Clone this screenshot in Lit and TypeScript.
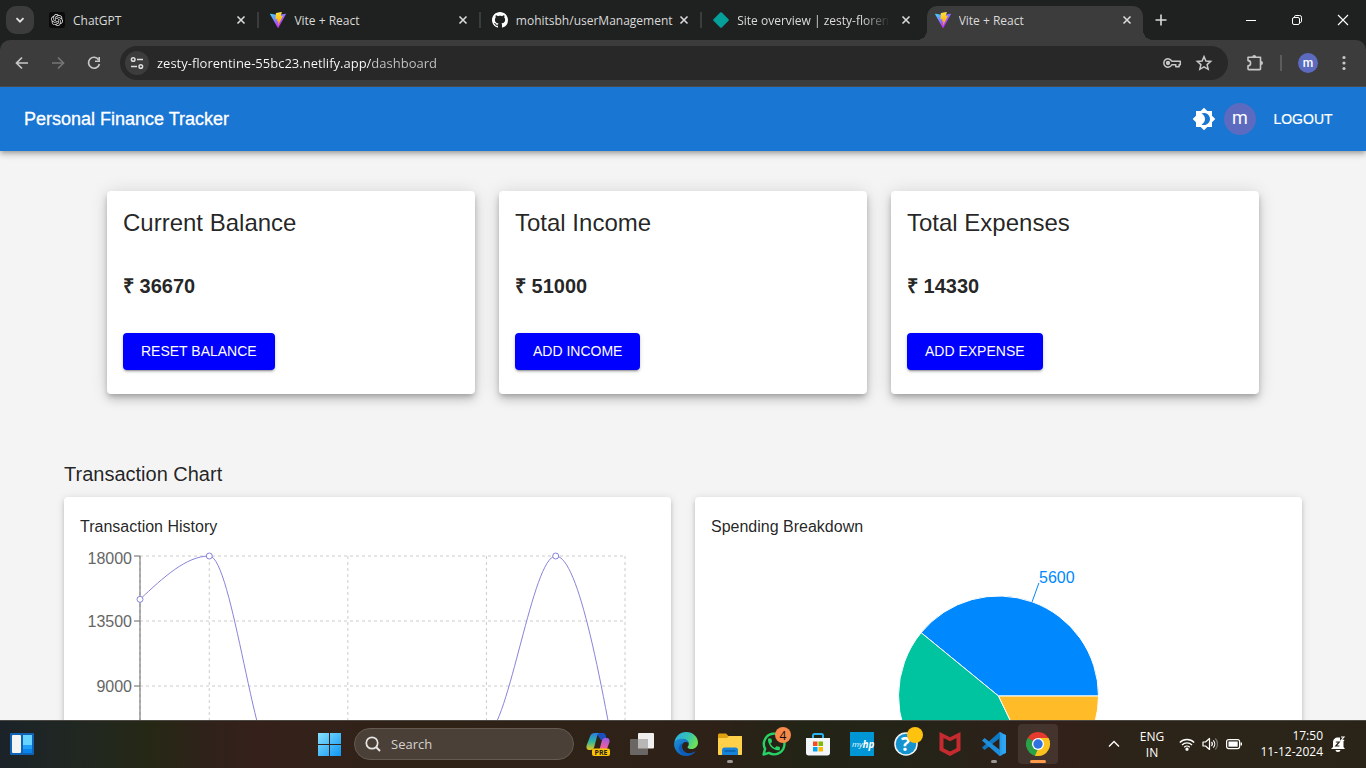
import { LitElement, html, css, svg, TemplateResult } from "lit";
import { customElement, property } from "lit/decorators.js";

const SYSTEM_FONT = css`"Open Sans", "Noto Sans", sans-serif`;
const PAGE_FONT = css`"Liberation Sans", Arial, sans-serif`;

const viteIcon = () => html`
  <svg width="16" height="16" viewBox="0 0 256 257" aria-hidden="true">
    <defs>
      <linearGradient id="va" x1="0%" x2="58%" y1="8%" y2="79%">
        <stop offset="0%" stop-color="#41d1ff" />
        <stop offset="100%" stop-color="#bd34fe" />
      </linearGradient>
      <linearGradient id="vb" x1="43%" x2="50%" y1="2%" y2="89%">
        <stop offset="0%" stop-color="#ffea83" />
        <stop offset="8%" stop-color="#ffdd35" />
        <stop offset="100%" stop-color="#ffa800" />
      </linearGradient>
    </defs>
    <path fill="url(#va)" d="M255.153 37.938L134.897 252.976c-2.483 4.44-8.862 4.466-11.382.048L.875 37.958c-2.746-4.814 1.371-10.646 6.827-9.67l120.385 21.517a6.537 6.537 0 0 0 2.322-.004l117.867-21.483c5.438-.991 9.574 4.796 6.877 9.62Z" />
    <path fill="url(#vb)" d="M185.432.063L96.44 17.501a3.268 3.268 0 0 0-2.634 3.014l-5.474 92.456a3.268 3.268 0 0 0 3.997 3.378l24.777-5.718c2.318-.535 4.413 1.507 3.936 3.838l-7.361 36.047c-.495 2.426 1.782 4.5 4.151 3.78l15.304-4.649c2.372-.72 4.652 1.36 4.15 3.788l-11.698 56.621c-.732 3.542 3.979 5.473 5.943 2.437l1.313-2.028l72.516-144.72c1.215-2.423-.88-5.186-3.54-4.672l-25.505 4.922c-2.396.462-4.435-1.77-3.759-4.114l16.646-57.705c.677-2.35-1.37-4.583-3.769-4.113Z" />
  </svg>`;

const chatIcon = () => html`
  <svg width="16" height="16" viewBox="0 0 32 32" aria-hidden="true">
    <rect width="32" height="32" rx="5" fill="#0b0b0b" />
    <path transform="translate(4 4)" fill="#e6e6e6" d="M22.2819 9.8211a5.9847 5.9847 0 0 0-.5157-4.9108 6.0462 6.0462 0 0 0-6.5098-2.9A6.0651 6.0651 0 0 0 4.9807 4.1818a5.9847 5.9847 0 0 0-3.9977 2.9 6.0462 6.0462 0 0 0 .7427 7.0966 5.98 5.98 0 0 0 .511 4.9107 6.051 6.051 0 0 0 6.5146 2.9001A5.9847 5.9847 0 0 0 13.2599 24a6.0557 6.0557 0 0 0 5.7718-4.2058 5.9894 5.9894 0 0 0 3.9977-2.9001 6.0557 6.0557 0 0 0-.7475-7.0729zm-9.022 12.6081a4.4755 4.4755 0 0 1-2.8764-1.0408l.1419-.0804 4.7783-2.7582a.7948.7948 0 0 0 .3927-.6813v-6.7369l2.02 1.1686a.071.071 0 0 1 .038.052v5.5826a4.504 4.504 0 0 1-4.4945 4.4944zm-9.6607-4.1254a4.4708 4.4708 0 0 1-.5346-3.0137l.142.0852 4.783 2.7582a.7712.7712 0 0 0 .7806 0l5.8428-3.3685v2.3324a.0804.0804 0 0 1-.0332.0615L9.74 19.9502a4.4992 4.4992 0 0 1-6.1408-1.6464zM2.3408 7.8956a4.485 4.485 0 0 1 2.3655-1.9728V11.6a.7664.7664 0 0 0 .3879.6765l5.8144 3.3543-2.0201 1.1685a.0757.0757 0 0 1-.071 0l-4.8303-2.7865A4.504 4.504 0 0 1 2.3408 7.872zm16.5963 3.8558L13.1038 8.364 15.1192 7.2a.0757.0757 0 0 1 .071 0l4.8303 2.7913a4.4944 4.4944 0 0 1-.6765 8.1042v-5.6772a.79.79 0 0 0-.407-.667zm2.0107-3.0231l-.142-.0852-4.7735-2.7818a.7759.7759 0 0 0-.7854 0L9.409 9.2297V6.8974a.0662.0662 0 0 1 .0284-.0615l4.8303-2.7866a4.4992 4.4992 0 0 1 6.6802 4.66zM8.3065 12.863l-2.02-1.1638a.0804.0804 0 0 1-.038-.0567V6.0742a4.4992 4.4992 0 0 1 7.3757-3.4537l-.142.0805L8.704 5.459a.7948.7948 0 0 0-.3927.6813zm1.0976-2.3654l2.602-1.4998 2.6069 1.4998v2.9994l-2.5974 1.4997-2.6067-1.4997Z" />
  </svg>`;

const githubIcon = () => html`
  <svg width="16" height="16" viewBox="0 0 16 16" aria-hidden="true">
    <path fill="#fff" d="M8 0C3.58 0 0 3.58 0 8c0 3.54 2.29 6.53 5.47 7.59.4.07.55-.17.55-.38 0-.19-.01-.82-.01-1.49-2.01.37-2.53-.49-2.69-.94-.09-.23-.48-.94-.82-1.13-.28-.15-.68-.52-.01-.53.63-.01 1.08.58 1.23.82.72 1.21 1.87.87 2.33.66.07-.52.28-.87.51-1.07-1.78-.2-3.64-.89-3.64-3.95 0-.87.31-1.59.82-2.15-.08-.2-.36-1.02.08-2.12 0 0 .67-.21 2.2.82.64-.18 1.32-.27 2-.27s1.36.09 2 .27c1.53-1.04 2.2-.82 2.2-.82.44 1.1.16 1.92.08 2.12.51.56.82 1.27.82 2.15 0 3.07-1.87 3.75-3.65 3.95.29.25.54.73.54 1.48 0 1.07-.01 1.93-.01 2.2 0 .21.15.46.55.38A8.01 8.01 0 0 0 16 8c0-4.42-3.58-8-8-8z" />
  </svg>`;

const netlifyIcon = () => html`
  <svg width="16" height="16" viewBox="0 0 16 16" aria-hidden="true">
    <path fill="#05a09a" d="M7.2.5a1.2 1.2 0 0 1 1.6 0l6.7 6.7a1.2 1.2 0 0 1 0 1.6l-6.7 6.7a1.2 1.2 0 0 1-1.6 0L.5 8.800a1.200 1.200 0 0 1 0-1.600z" />
  </svg>`;

const closeIcon = () => html`
  <svg width="16" height="16" viewBox="0 0 16 16" aria-hidden="true">
    <path d="M4.500 4.500l7 7M11.500 4.500l-7 7" stroke="#dadada" stroke-width="1.600" />
  </svg>`;

interface Tab { title: string; icon: () => TemplateResult; active?: boolean; last?: boolean; }

const TABS: Tab[] = [
  { title: "ChatGPT", icon: chatIcon },
  { title: "Vite + React", icon: viteIcon },
  { title: "mohitsbh/userManagement", icon: githubIcon },
  { title: "Site overview | zesty-florentine", icon: netlifyIcon, last: true },
  { title: "Vite + React", icon: viteIcon, active: true },
];

@customElement("browser-bar")
class BrowserBar extends LitElement {
  static styles = css`
    :host { display: block; background: #1f2120; font: 12px/16px ${SYSTEM_FONT}; color: #dadada; }
    button { all: unset; box-sizing: border-box; display: grid; place-items: center; cursor: pointer; flex: none; }
    svg { display: block; }
    .strip { display: flex; height: 40px; }
    .search { width: 28px; height: 28px; margin: 6px 6px 0 6px; border-radius: 10px; background: #3c3c3c; }
    .tabs { display: flex; flex: 0 1 1107px; min-width: 0; }
    .slot { display: flex; flex: 1 1 0; min-width: 0; align-items: flex-end; padding-left: 1px; }
    .tab { position: relative; display: flex; flex: 1; min-width: 0; align-items: center; height: 34px; padding: 0 8px 6px 8px; box-sizing: border-box; }
    .tab svg { flex: none; }
    .title { flex: 1; min-width: 0; margin-left: 8px; padding-top: 2px; overflow: hidden; white-space: nowrap; }
    .fade { -webkit-mask-image: linear-gradient(to right, #000 78%, transparent 95%); mask-image: linear-gradient(to right, #000 78%, transparent 95%); }
    .sep { flex: none; width: 2px; height: 16px; margin: 0 2px 12px 0; background: #3c3c3c; }
    .sep.off { background: transparent; }
    .active { background: #3c3c3c; border-radius: 10px 10px 0 0; }
    .active::before, .active::after { content: ""; position: absolute; bottom: 0; width: 10px; height: 10px; }
    .active::before { left: -10px; background: radial-gradient(circle at 0 0, transparent 10px, #3c3c3c 10px); }
    .active::after { right: -10px; background: radial-gradient(circle at 100% 0, transparent 10px, #3c3c3c 10px); }
    .new { width: 28px; height: 40px; }
    .window { display: flex; margin-left: auto; }
    .window button { width: 46px; height: 40px; }
    .bar { display: flex; align-items: center; gap: 16px; height: 46px; padding: 0 12px; background: #3c3c3c; border-bottom: 1px solid #4a4a4a; border-radius: 10px 10px 0 0; }
    .omni { display: flex; flex: 1; min-width: 0; align-items: center; height: 34px; border-radius: 17px; background: #282828; padding: 0 14px 0 5px; box-sizing: border-box; gap: 12px; }
    .site { width: 24px; height: 24px; border-radius: 12px; background: #3c3c3c; }
    .url { flex: 1; min-width: 0; border: 0; outline: 0; padding: 0; margin-left: -4px; height: 24px; font: 13px/24px ${SYSTEM_FONT}; color: transparent; background: linear-gradient(to right, #fff 214px, #c7c7c7 214px); -webkit-background-clip: text; background-clip: text; }
    .rule { width: 2px; height: 16px; background: #5c5c5c; }
    .me { width: 20px; height: 20px; border-radius: 10px; background: #5c6bc0; color: #fff; font: 500 12px/18px Roboto, sans-serif; }
  `;

  render() {
    return html`
      <div class="strip">
        <button class="search" aria-label="Search tabs">
          <svg width="12" height="12" viewBox="0 0 12 12"><path d="M2.500 4.200L6 7.700l3.500-3.500" fill="none" stroke="#e3e3e3" stroke-width="1.800" /></svg>
        </button>
        <div class="tabs">
          ${TABS.map((t) => html`
            <div class="slot">
              <div class="tab ${t.active ? "active" : ""}">
                ${t.icon()}
                <span class="title ${t.last ? "fade" : ""}">${t.title}</span>
                <button aria-label="Close tab">${closeIcon()}</button>
              </div>
              <span class="sep ${t.last || t.active ? "off" : ""}"></span>
            </div>`)}
        </div>
        <button class="new" aria-label="New tab">
          <svg width="14" height="14" viewBox="0 0 14 14"><path d="M7 1.500v11M1.500 7h11" stroke="#dadada" stroke-width="1.600" /></svg>
        </button>
        <div class="window">
          <button aria-label="Minimize"><svg width="12" height="12" viewBox="0 0 12 12"><path d="M1 6.500h10" stroke="#fff" /></svg></button>
          <button aria-label="Restore"><svg width="12" height="12" viewBox="0 0 12 12" fill="none" stroke="#fff"><rect x="1.500" y="3.500" width="7" height="7" rx="1.500" /><path d="M3.500 3V2.800A1.300 1.300 0 0 1 4.800 1.500h3.900a1.800 1.800 0 0 1 1.800 1.800v3.900a1.300 1.300 0 0 1-1.300 1.300H9" /></svg></button>
          <button aria-label="Close"><svg width="12" height="12" viewBox="0 0 12 12"><path d="M1 1l10 10M11 1L1 11" stroke="#fff" stroke-width="1.100" /></svg></button>
        </div>
      </div>
      <div class="bar">
        <button aria-label="Back"><svg width="20" height="20" viewBox="0 0 20 20"><path d="M16 10H5M10 4.500L4.500 10l5.500 5.500" fill="none" stroke="#c7c7c7" stroke-width="1.700" /></svg></button>
        <button aria-label="Forward"><svg width="20" height="20" viewBox="0 0 20 20"><path d="M4 10h11M10 4.500l5.500 5.500-5.500 5.500" fill="none" stroke="#757575" stroke-width="1.700" /></svg></button>
        <button aria-label="Reload"><svg width="20" height="20" viewBox="0 0 20 20"><path d="M14.700 6.800A5.500 5.500 0 1 0 15.400 11" fill="none" stroke="#c7c7c7" stroke-width="1.700" /><path d="M16 4v5h-5V7.400h3.400V4z" fill="#c7c7c7" /></svg></button>
        <div class="omni">
          <button class="site" aria-label="View site information">
            <svg width="16" height="16" viewBox="0 0 16 16" fill="none" stroke="#dcdcdc" stroke-width="1.500"><circle cx="4.200" cy="4.500" r="1.800" /><path d="M8 4.500h6M2 11.500h6" /><circle cx="11.800" cy="11.500" r="1.800" /></svg>
          </button>
          <input class="url" aria-label="Address" .value=${"zesty-florentine-55bc23.netlify.app/dashboard"} />
          <button aria-label="Passwords"><svg width="20" height="20" viewBox="0 0 20 20" fill="none" stroke="#c7c7c7" stroke-width="1.500"><path d="M9.800 8.200h8.500v3.600h-1.200v2h-3.300v-2H9.800a4.200 4.200 0 1 1 0-3.600z" stroke-linejoin="round" /><circle cx="6" cy="10" r="1.400" fill="#c7c7c7" /></svg></button>
          <button aria-label="Bookmark"><svg width="20" height="20" viewBox="0 0 20 20"><path d="M10 3.600l1.900 4.400 4.800.4-3.600 3.200 1.100 4.700-4.200-2.500-4.200 2.500 1.100-4.700-3.600-3.200 4.800-.4z" fill="none" stroke="#c7c7c7" stroke-width="1.500" /></svg></button>
        </div>
        <button aria-label="Extensions"><svg width="20" height="20" viewBox="-1 0 20 20"><path d="M3 4.200h12.500v5.600a1 1 0 0 1 0 .4v5.600a.8.800 0 0 1-.8.800H3.800a.8.800 0 0 1-.8-.8v-3a2.600 2.600 0 0 0 0-5.200z" fill="none" stroke="#c7c7c7" stroke-width="1.600" stroke-linejoin="round" /><path d="M7.200 4a2 2 0 0 1 4 0zM16 8a2 2 0 0 1 0 4z" fill="#c7c7c7" /></svg></button>
        <span class="rule"></span>
        <button class="me" aria-label="Profile">m</button>
        <button aria-label="Menu"><svg width="20" height="20" viewBox="0 0 20 20" fill="#c7c7c7"><circle cx="10" cy="4.500" r="1.600" /><circle cx="10" cy="10" r="1.600" /><circle cx="10" cy="15.500" r="1.600" /></svg></button>
      </div>`;
  }
}

const Y_TICKS = [
  { label: "18000", y: 5, base: 13 },
  { label: "13500", y: 70, base: 76 },
  { label: "9000", y: 135, base: 141 },
  { label: "4500", y: 200, base: 206 },
  { label: "0", y: 265, base: 271 },
];
const X_LINES = [129.29, 267.86, 406.43, 545];
const DOTS = [[60, 48.3], [129.29, 5], [198.57, 220], [406.43, 185], [475.71, 5], [545, 265]];

@customElement("history-chart")
class HistoryChart extends LitElement {
  static styles = css`
    :host { display: block; }
    svg { display: block; width: 100%; height: 300px; overflow: visible; }
    text { font: 16px ${PAGE_FONT}; fill: #666; }
    .grid { stroke: #ccc; stroke-dasharray: 3 3; }
    .axis { stroke: #666; }
    .line { fill: none; stroke: #8884d8; }
    .dot { fill: #fff; stroke: #8884d8; }
  `;
  render() {
    return html`
      <svg viewBox="0 0 575 300" preserveAspectRatio="xMinYMin meet" role="img" aria-label="Transaction history">
        ${Y_TICKS.map((t) => svg`<line class="grid" x1="60" x2="545" y1=${t.y} y2=${t.y} />`)}
        ${X_LINES.map((x) => svg`<line class="grid" x1=${x} x2=${x} y1="5" y2="265" />`)}
        <line class="grid" x1="60" x2="60" y1="5" y2="265" />
        <line class="axis" x1="60" x2="60" y1="5" y2="265" />
        <line class="axis" x1="60" x2="545" y1="265" y2="265" />
        ${Y_TICKS.map((t) => svg`
          <line class="axis" x1="54" x2="60" y1=${t.y} y2=${t.y} />
          <text x="52" y=${t.base} text-anchor="end">${t.label}</text>`)}
        <path class="line" d="M60 48.300C83.100 26.700 106.200 5 129.290 5C152.400 5 175.500 220 198.570 220C221.700 220 244.800 245 267.860 245C290.900 245 314 230 337.140 225C360.200 215 383.300 196 406.430 185C429.500 174 452.600 5 475.710 5C498.800 5 521.900 131 545 265" />
        ${DOTS.map(([x, y]) => svg`<circle class="dot" cx=${x} cy=${y} r="3" />`)}
      </svg>`;
  }
}

const SLICES = [
  { from: 0, to: 140.7, color: "#0088fe" },
  { from: 140.7, to: 295.7, color: "#00c49f" },
  { from: 295.7, to: 360, color: "#ffbb28" },
];

function slicePath(from: number, to: number): string {
  const p = (a: number) => {
    const r = (a * Math.PI) / 180;
    return `${(287.5 + 100 * Math.cos(r)).toFixed(2)} ${(145 - 100 * Math.sin(r)).toFixed(2)}`;
  };
  return `M287.5 145L${p(from)}A100 100 0 ${to - from > 180 ? 1 : 0} 0 ${p(to)}Z`;
}

@customElement("spending-chart")
class SpendingChart extends LitElement {
  static styles = css`
    :host { display: block; }
    svg { display: block; width: 100%; height: 300px; }
    text { font: 16px ${PAGE_FONT}; fill: #0088fe; }
    .slice { stroke: #fff; }
    .lead { fill: none; stroke: #0088fe; }
  `;
  render() {
    return html`
      <svg viewBox="0 0 575 300" preserveAspectRatio="xMidYMin meet" role="img" aria-label="Spending breakdown">
        ${SLICES.map((s) => svg`<path class="slice" fill=${s.color} d=${slicePath(s.from, s.to)} />`)}
        <path class="lead" d="M321.100 50.800L327.900 32" />
        <text x="328" y="32">5600</text>
      </svg>`;
  }
}

@customElement("summary-card")
class SummaryCard extends LitElement {
  @property() heading = "";
  @property() amount = "";
  @property() action = "";

  static styles = css`
    :host { display: flex; flex-direction: column; align-items: flex-start; gap: 32px; padding: 16px 16px 24px; background: #fff; border-radius: 4px; box-shadow: 0 3px 5px -1px rgba(0,0,0,.2), 0 6px 10px 0 rgba(0,0,0,.14), 0 1px 18px 0 rgba(0,0,0,.12); color: rgba(0,0,0,.87); }
    h2 { margin: 0; font-size: 24px; line-height: 32px; font-weight: 400; }
    p { margin: 0; font-size: 20px; line-height: 30px; font-weight: 700; }
    button { border: 0; border-radius: 4px; padding: 0 18px 2px; height: 37px; background: #00f; color: #fff; font: 14px/24px ${PAGE_FONT}; text-transform: uppercase; cursor: pointer; box-shadow: 0 3px 1px -2px rgba(0,0,0,.2), 0 2px 2px 0 rgba(0,0,0,.14), 0 1px 5px 0 rgba(0,0,0,.12); }
  `;
  render() {
    return html`<h2>${this.heading}</h2><p>₹ ${this.amount}</p><button>${this.action}</button>`;
  }
}

@customElement("finance-page")
class FinancePage extends LitElement {
  static styles = css`
    :host { display: flex; flex-direction: column; background: #f4f4f4; font-family: ${PAGE_FONT}; color: rgba(0,0,0,.87); }
    header { display: flex; flex: none; align-items: center; gap: 8px; height: 64px; padding: 0 24px; background: #1976d2; color: #fff; position: relative; box-shadow: 0 2px 4px -1px rgba(0,0,0,.2), 0 4px 5px 0 rgba(0,0,0,.14), 0 1px 10px 0 rgba(0,0,0,.12); }
    h1 { flex: 1; margin: 0; font-size: 18px; line-height: 28px; font-weight: 400; -webkit-text-stroke: 0.3px #fff; }
    header button { border: 0; padding: 0; background: none; color: inherit; font: 14px/24px ${PAGE_FONT}; cursor: pointer; }
    .theme svg { display: block; }
    .avatar { display: grid; place-items: center; width: 32px; height: 32px; border-radius: 16px; background: #5c6bc0; font: 18px/30px Roboto, sans-serif; align-content: start; }
    header .logout { width: 78px; -webkit-text-stroke: 0.2px #fff; }
    .summary { display: grid; grid-template-columns: repeat(3, 1fr); gap: 24px; box-sizing: border-box; width: 100%; max-width: 1200px; margin: 0 auto; padding: 40px 24px 64px; }
    .charts { padding: 0 64px 32px; }
    h2 { margin: 0 0 6px; font-size: 20px; line-height: 33px; font-weight: 400; }
    .pair { display: grid; grid-template-columns: 1fr 1fr; gap: 24px; }
    .panel { background: #fff; border-radius: 4px; padding: 16px; box-shadow: 0 3px 3px -2px rgba(0,0,0,.2), 0 3px 4px 0 rgba(0,0,0,.14), 0 1px 8px 0 rgba(0,0,0,.12); }
    h3 { margin: 0 0 10px; font-size: 16px; line-height: 28px; font-weight: 400; }
  `;
  render() {
    return html`
      <header>
        <h1>Personal Finance Tracker</h1>
        <button class="theme" aria-label="Toggle theme">
          <svg width="24" height="24" viewBox="0 0 24 24" fill="#fff"><path d="M20 8.690V4h-4.690L12 .69 8.690 4H4v4.690L.69 12 4 15.310V20h4.690L12 23.310 15.310 20H20v-4.690L23.310 12 20 8.690zM12 18c-.89 0-1.740-.2-2.500-.55C11.560 16.500 13 14.420 13 12s-1.440-4.500-3.500-5.450C10.260 6.200 11.110 6 12 6c3.310 0 6 2.690 6 6s-2.690 6-6 6z" /></svg>
        </button>
        <span class="avatar">m</span>
        <button class="logout">LOGOUT</button>
      </header>
      <section class="summary">
        <summary-card heading="Current Balance" amount="36670" action="Reset Balance"></summary-card>
        <summary-card heading="Total Income" amount="51000" action="Add Income"></summary-card>
        <summary-card heading="Total Expenses" amount="14330" action="Add Expense"></summary-card>
      </section>
      <section class="charts">
        <h2>Transaction Chart</h2>
        <div class="pair">
          <div class="panel"><h3>Transaction History</h3><history-chart></history-chart></div>
          <div class="panel"><h3>Spending Breakdown</h3><spending-chart></spending-chart></div>
        </div>
      </section>`;
  }
}

interface App { name: string; art: TemplateResult; state?: string; }

const APPS: App[] = [
  { name: "Copilot", art: svg`
    <defs>
      <linearGradient id="c1" x1="0" y1="0" x2="0" y2="1"><stop offset="0" stop-color="#2b7de0" /><stop offset=".5" stop-color="#2fb5a0" /><stop offset="1" stop-color="#e8c71c" /></linearGradient>
      <linearGradient id="c2" x1="0.500" y1="0" x2="0.300" y2="1"><stop offset="0" stop-color="#a05be0" /><stop offset=".5" stop-color="#e85fa0" /><stop offset="1" stop-color="#ff8c5a" /></linearGradient>
    </defs>
    <path d="M10 1h7c1.500 0 2.300 1 2.800 2.600L21 8h-6z" fill="#1b4fc0" />
    <path d="M8.500 1H14c-1.500 0-2.300 1-2.800 2.800L8.200 15c-.6 2-1.600 3-3.400 3H3.500C.8 18 0 16 .6 13.500L4.200 4C5 2 6.300 1 8.500 1z" fill="url(#c1)" />
    <path d="M15.500 23H10c1.500 0 2.300-1 2.800-2.800L15.800 9c.6-2 1.600-3 3.400-3h1.300c2.700 0 3.500 2 2.900 4.500L19.800 20c-.8 2-2.100 3-4.300 3z" fill="url(#c2)" />
    <rect x="6" y="16.500" width="18" height="7.500" rx="2" fill="#fdc500" />
    <text x="15" y="22.800" font-size="7" font-weight="700" text-anchor="middle" fill="#222">PRE</text>` },
  { name: "Task view", art: svg`
    <rect x="8" y="1" width="16" height="15.500" rx="1" fill="#efefef" />
    <rect x="0" y="7" width="18" height="16" rx="1" fill="#6a6664" />
    <rect x="8" y="7" width="10" height="9.500" fill="#b9b7b6" />` },
  { name: "Edge", art: svg`
    <defs>
      <linearGradient id="e1" x1="0" y1="0" x2="1" y2=".4"><stop offset="0" stop-color="#2aa9e8" /><stop offset=".6" stop-color="#35c3b4" /><stop offset="1" stop-color="#6be05a" /></linearGradient>
      <linearGradient id="e2" x1="0" y1="0" x2="1" y2="1"><stop offset="0" stop-color="#1b8fdc" /><stop offset="1" stop-color="#0d4ea6" /></linearGradient>
    </defs>
    <path d="M.3 11C1 4.500 6 0 12 0c7 0 12 5 12 10.500 0 4-3 6.500-6.500 6.500-2.500 0-4-1-4-1.800 0-.6 1.300-1.200 1.300-3.200 0-2.800-2.600-4.800-6-4.800C4.500 7.200 1.500 9 .3 11z" fill="url(#e1)" />
    <path d="M.1 11.500C.8 8.500 4 6.800 8 6.800c4 0 6.600 2.200 6.800 4.800-.6-1-1.800-1.600-3.200-1.600-2 0-3.600 1.700-3.600 4.400 0 4 3.500 7.200 8 7 2.300 0 4-.8 5.500-1.800C19.500 22.300 16 24 12 24 5 24-.3 18 .1 11.500z" fill="url(#e2)" />
    <path d="M8.800 11.200c-1.500 1.800-1.300 5 .4 7.400 2 2.700 5.500 3.500 8.500 2.500 1.700-.5 3-1.300 3.800-2-.8 1.500-3 3.600-6 4.400C9 24.500 4 19.500 5 15c.5-2 2-3.400 3.800-3.800z" fill="#0c5cb8" />` },
  { name: "File Explorer", state: "open", art: svg`
    <path d="M0 3c0-.8.600-1.500 1.500-1.500H8L10.500 4H23c.6 0 1 .4 1 1v4H0z" fill="#e0a010" />
    <path d="M0 6h9l2-2h12c.6 0 1 .4 1 1v17c0 .6-.4 1-1 1H1c-.6 0-1-.4-1-1z" fill="#ffd04a" />
    <path d="M4 23v-5c0-1.500 1-2.500 2.500-2.500h11c1.500 0 2.500 1 2.500 2.500v5z" fill="#1683d8" />
    <path d="M6.500 19h11" stroke="#0c5ea8" stroke-width="1.500" />` },
  { name: "WhatsApp", art: svg`
    <path d="M1.500 22.500l1.600-5.600A10.300 10.300 0 1 1 7 20.900z" fill="none" stroke="#25d366" stroke-width="2.400" stroke-linejoin="round" />
    <path transform="translate(4 4.500) scale(.66)" d="M6.620 10.790c1.440 2.830 3.760 5.140 6.590 6.590l2.200-2.200c.27-.27.670-.36 1.020-.24 1.120.37 2.330.57 3.570.57.550 0 1 .45 1 1V20c0 .55-.45 1-1 1-9.390 0-17-7.610-17-17 0-.55.450-1 1-1h3.500c.55 0 1 .45 1 1 0 1.250.2 2.450.57 3.570.11.350.030.740-.25 1.020l-2.200 2.200z" fill="#25d366" />
    <circle cx="21" cy="3" r="8" fill="#f7894a" />
    <text x="21" y="7.500" font-size="12" text-anchor="middle" fill="#111">4</text>` },
  { name: "Store", art: svg`
    <path d="M7 6V3.500C7 2.500 7.500 2 8.500 2h7c1 0 1.500.5 1.500 1.500V6" fill="none" stroke="#29b3f0" stroke-width="2" />
    <path d="M0 6h24v15c0 1.500-1 2.500-2.500 2.500h-19C1 23.500 0 22.500 0 21z" fill="#f3f6f8" />
    <path d="M7 9.500h4.500V14H7z" fill="#f25022" /><path d="M12.500 9.500H17V14h-4.500z" fill="#7fba00" />
    <path d="M7 15h4.500v4.500H7z" fill="#00a4ef" /><path d="M12.500 15H17v4.500h-4.500z" fill="#ffb900" />` },
  { name: "myHP", art: svg`
    <rect width="24" height="24" fill="#0096d6" />
    <text x="2" y="15" font-size="8" font-style="italic" fill="#fff">my</text>
    <text x="12.500" y="15.500" font-size="10" font-weight="700" font-style="italic" fill="#fff">hp</text>` },
  { name: "Help", art: svg`
    <circle cx="12" cy="12" r="11.800" fill="#f4f4f4" /><circle cx="12" cy="12" r="10.300" fill="#1593cf" />
    <text x="11.500" y="19" font-size="19" font-weight="700" text-anchor="middle" fill="#fff">?</text>
    <circle cx="21" cy="3" r="8" fill="#ffc20e" />` },
  { name: "McAfee", art: svg`
    <path d="M1.500 0L12 5.200 22.500 0v18.500L12 24 1.500 18.500zM5.500 6v10.300L12 19.600l6.500-3.300V6L12 9.300z" fill="#c52a2f" fill-rule="evenodd" />` },
  { name: "Visual Studio Code", state: "open", art: svg`
    <path d="M17.500 0L24 3v18l-6.500 3z" fill="#2ea5f2" />
    <path d="M17.500 0L0 15.500 2.500 18 18 6z" fill="#0f78c4" />
    <path d="M17.500 24L0 8.500 2.500 6 18 18z" fill="#1d8edb" />
    <path d="M17.500 0L18 6v12l-.5 6 2.500-1V1z" fill="#249ceb" />` },
  { name: "Chrome", state: "current", art: svg`
    <path d="M12 12L1.600 6A12 12 0 0 1 22.400 6z" fill="#e53a2d" />
    <path d="M12 12L22.400 6A12 12 0 0 1 12 24z" fill="#fcc31e" />
    <path d="M12 12v12A12 12 0 0 1 1.600 6z" fill="#2aa148" />
    <path d="M12 6h10.400c.8 1.500 1.300 3 1.500 5H17z" fill="#fcc31e" />
    <path d="M17.200 15L12 24c-1.500 0-2-.1-3-.3L12 17z" fill="#fcc31e" />
    <path d="M6.800 15L1.600 6 7 9z" fill="#2aa148" />
    <circle cx="12" cy="12" r="6" fill="#fff" /><circle cx="12" cy="12" r="4.700" fill="#2f73e0" />` },
];

@customElement("task-bar")
class TaskBar extends LitElement {
  static styles = css`
    :host { display: grid; grid-template-columns: 1fr auto 1fr; align-items: center; height: 48px; box-shadow: inset 0 1px #4c4844; color: #fff; font: 12px/16px ${SYSTEM_FONT}; background: linear-gradient(to right, #1b2329 0%, #22281f 7%, #262815 11%, #2f221a 15%, #35201a 19%, #33221a 23%, #2f2217 30%, #2e2117 52%, #222416 59%, #262318 69%, #33201a 77%, #2c2418 83%, #2a2418 100%); }
    button { all: unset; display: grid; place-items: center; cursor: pointer; }
    svg { display: block; overflow: visible; font-family: ${SYSTEM_FONT}; }
    .widgets { padding-left: 10px; justify-self: start; }
    .mid { display: flex; align-items: center; padding-left: 2px; }
    .app { position: relative; width: 44px; height: 48px; }
    .app.current::before { content: ""; position: absolute; inset: 4px 2px; border-radius: 4px; background: rgba(255,255,255,.09); }
    .app svg { position: relative; }
    .app.open::after, .app.current::after { content: ""; position: absolute; bottom: 5px; height: 3px; border-radius: 2px; width: 6px; background: #9a9794; }
    .app.current::after { width: 16px; background: #ff9a4a; }
    .find { display: flex; align-items: center; gap: 9px; box-sizing: border-box; width: 220px; height: 32px; margin: 0 2px; padding: 0 9px; border: 1px solid #655a51; border-radius: 16px; background: #4b4037; }
    .find input { flex: 1; min-width: 0; border: 0; outline: 0; padding: 0; background: none; color: #fff; font: 13px/20px ${SYSTEM_FONT}; }
    .find input::placeholder { color: #d6d2cf; opacity: 1; }
    .tray { display: flex; align-items: center; justify-self: end; padding-right: 20px; }
    .lang { width: 40px; margin: 0 7px 0 12px; padding-top: 2px; text-align: center; }
    .status { display: flex; align-items: center; gap: 7px; }
    .clock { width: 72px; margin: 0 7px 0 8px; text-align: right; }
  `;
  render() {
    return html`
      <button class="widgets" aria-label="Widgets">
        <svg width="24" height="22" viewBox="0 0 24 22"><rect width="24" height="22" rx="1" fill="#0f62b4" /><rect x="2" y="2" width="9" height="18" rx="1" fill="#f4f4f4" /><path d="M13 2h9v10h-9z" fill="#67d3ff" /><path d="M13 12h9v4h-9z" fill="#1fa0f5" /><path d="M13 16h9v4h-9z" fill="#0a84ea" /></svg>
      </button>
      <div class="mid">
        <button class="app" aria-label="Start">
          <svg width="24" height="24" viewBox="0 0 24 24"><defs><linearGradient id="w" x1="0" y1="0" x2="24" y2="24" gradientUnits="userSpaceOnUse"><stop offset="0" stop-color="#8be2fb" /><stop offset="1" stop-color="#0a95f5" /></linearGradient></defs><path fill="url(#w)" d="M0 1h11v11H0zM12 1h11v11H12zM0 13h11v11H0zM12 13h11v11H12z" /></svg>
        </button>
        <label class="find">
          <svg width="18" height="18" viewBox="0 0 18 18" fill="none" stroke="#e8e6e4" stroke-width="1.700"><circle cx="8" cy="8" r="5.700" /><path d="M12 12l4 4" stroke-width="2" /></svg>
          <input type="text" placeholder="Search" aria-label="Search" />
        </label>
        ${APPS.map((a) => html`<button class="app ${a.state ?? ""}" aria-label=${a.name}><svg width="24" height="24" viewBox="0 0 24 24">${a.art}</svg></button>`)}
      </div>
      <div class="tray">
        <button aria-label="Show hidden icons"><svg width="12" height="12" viewBox="0 0 12 12"><path d="M1 8.500l5-5 5 5" fill="none" stroke="#fff" stroke-width="1.400" /></svg></button>
        <div class="lang">ENG<br />IN</div>
        <div class="status">
          <svg width="16" height="16" viewBox="0 0 16 16" fill="none" stroke="#fff" stroke-width="1.300"><path d="M.8 6.500a10.200 10.200 0 0 1 14.400 0M3 9a7.100 7.100 0 0 1 10 0M5.200 11.300a4 4 0 0 1 5.600 0" /><circle cx="8" cy="13.200" r="1" fill="#fff" /></svg>
          <svg width="16" height="16" viewBox="0 0 16 16" fill="none" stroke="#fff" stroke-width="1.200"><path d="M1 6h2.500L7.500 2.500v11L3.500 10H1z" stroke-linejoin="round" /><path d="M9.500 6a3 3 0 0 1 0 4M11.300 4.300a5.500 5.500 0 0 1 0 7.400" /><path d="M13.300 2.500a8 8 0 0 1 0 11" stroke="#777" /></svg>
          <svg width="18" height="16" viewBox="0 0 18 16"><rect x="1.600" y="3.600" width="13" height="9" rx="2" fill="none" stroke="#fff" stroke-width="1.200" /><rect x="3.500" y="5.500" width="9.200" height="5.200" fill="#fff" /><path d="M15.500 6.500h1.500v3h-1.500z" fill="#fff" /></svg>
        </div>
        <div class="clock">17:50<br />11-12-2024</div>
        <svg width="16" height="16" viewBox="0 0 16 16"><path d="M3 11V6.500C3 3.500 5 1.500 8 1.500h2V5h3.500v6l1.500 2H1zM5.500 14h5a2.500 2 0 0 1-5 0z" fill="#fff" /><path d="M5.800 6h3.400L5.800 10h3.600" fill="none" stroke="#2a2418" stroke-width="1.200" /><path d="M11 1h3l-3 3.400h3.200" fill="none" stroke="#fff" stroke-width="1.100" /></svg>
      </div>`;
  }
}

@customElement("app-root")
class AppRoot extends LitElement {
  static styles = css`
    :host { display: flex; flex-direction: column; height: 100vh; overflow: hidden; }
    browser-bar, task-bar { flex: none; }
    .view { flex: 1; min-height: 0; overflow: hidden; }
  `;
  render() {
    return html`
      <browser-bar></browser-bar>
      <main class="view"><finance-page></finance-page></main>
      <task-bar></task-bar>`;
  }
}
